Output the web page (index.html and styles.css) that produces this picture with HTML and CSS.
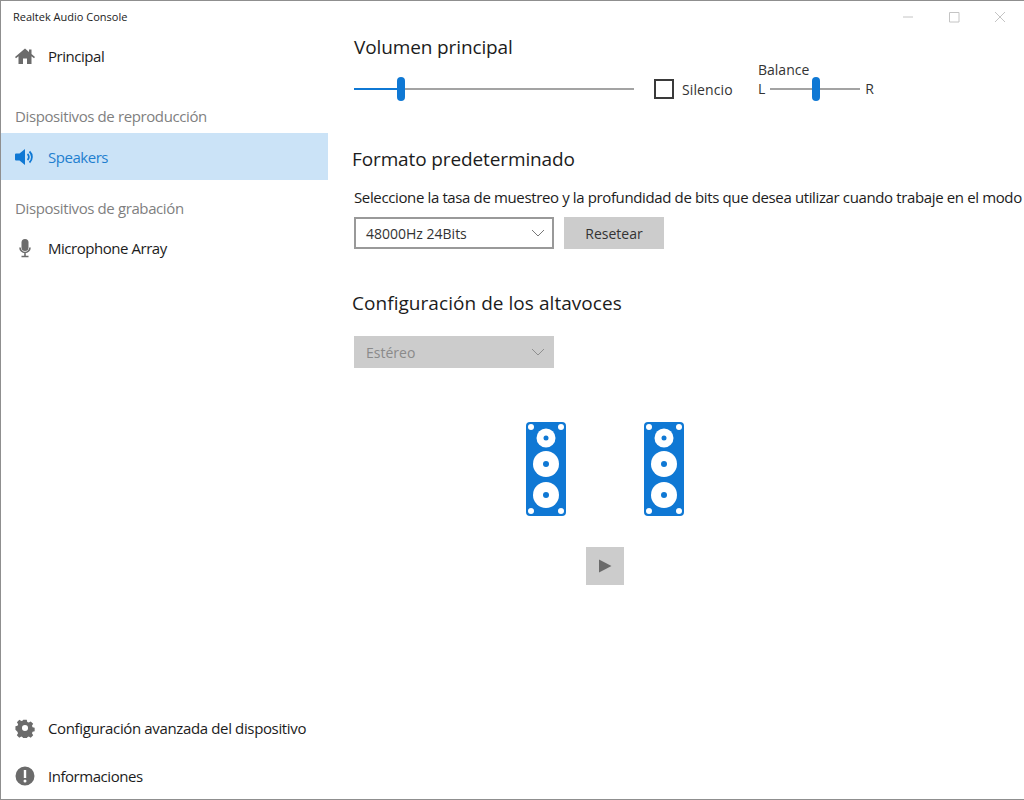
FILE: index.html
```html
<!DOCTYPE html>
<html lang="es">
<head>
<meta charset="utf-8">
<title>Realtek Audio Console</title>
<link rel="stylesheet" href="styles.css">
</head>
<body>
<div class="window">
  <header class="titlebar">
    <span class="app-title">Realtek Audio Console</span>
    <div class="controls">
      <svg class="ctl" viewBox="0 0 12 12"><path d="M1 6h10"/></svg>
      <svg class="ctl" viewBox="0 0 12 12"><path d="M1.500 1.500h9.500v9.500h-9.500z"/></svg>
      <svg class="ctl" viewBox="0 0 12 12"><path d="M1 1l10 10M11 1L1 11"/></svg>
    </div>
  </header>
  <div class="body">
    <nav class="sidebar">
      <div class="nav-item">
        <svg class="ico" viewBox="0 0 20 20"><path d="M10 2.500L0 11l1 1.200 2.500-2V18h4.500v-5.500h4V18h4.500v-7.800l2.500 2 1-1.200-3.500-3V3.500h-2.500V6z"/></svg>
        <span>Principal</span>
      </div>
      <div class="group first">Dispositivos de reproducción</div>
      <div class="nav-item active">
        <svg class="ico" viewBox="0 0 20 20"><path d="M0 7.500q0-1 1-1h3.500L10 2v16l-5.500-4.500H1q-1 0-1-1z"/><path class="wave" d="M12.500 7a4 4 0 0 1 0 6M14.500 4.500a7.500 7.500 0 0 1 0 11"/></svg>
        <span>Speakers</span>
      </div>
      <div class="group">Dispositivos de grabación</div>
      <div class="nav-item">
        <svg class="ico" viewBox="0 0 20 20"><rect x="6.500" y="1" width="7" height="12" rx="3.500"/><path class="line" d="M5 9.500a5 5 0 0 0 10 0M10 15v3M6.500 18.500h7"/></svg>
        <span>Microphone Array</span>
      </div>
      <div class="spacer"></div>
      <div class="nav-item long">
        <svg class="ico" viewBox="0 0 20 20"><path fill-rule="evenodd" d="M8 0.500h4l.6 2.600 1.700.7 2.300-1.400 2.800 2.800-1.400 2.300.7 1.700 2.400.6v4l-2.400.6-.7 1.700 1.400 2.300-2.800 2.800-2.300-1.400-1.700.7-.6 2.400H8l-.6-2.400-1.700-.7-2.300 1.400-2.800-2.800 1.400-2.300-.7-1.700L-1 12V8l2.400-.6.700-1.700L.7 3.400 3.500.6l2.300 1.400 1.700-.7zM10 6.500a3.500 3.500 0 1 0 0 7 3.500 3.500 0 0 0 0-7z" transform="translate(1.300 1.300) scale(.87)"/></svg>
        <span>Configuración avanzada del dispositivo</span>
      </div>
      <div class="nav-item">
        <svg class="ico" viewBox="0 0 20 20"><path fill-rule="evenodd" d="M10 0.500a9.500 9.500 0 1 1 0 19 9.500 9.500 0 0 1 0-19zM8.800 4v8h2.400V4zM10 13.500a1.500 1.500 0 1 0 0 3 1.500 1.500 0 0 0 0-3z"/></svg>
        <span>Informaciones</span>
      </div>
    </nav>
    <main class="main">
      <h2 class="h-volume">Volumen principal</h2>
      <div class="volume-row">
        <div class="slider vol"><i class="fill"></i><b class="thumb"></b></div>
        <label class="check"><i class="box"></i>Silencio</label>
        <div class="balance">
          <div class="bal-title">Balance</div>
          <div class="bal-row">
            <span>L</span>
            <div class="slider bal"><b class="thumb"></b></div>
            <span>R</span>
          </div>
        </div>
      </div>
      <h2 class="h-format">Formato predeterminado</h2>
      <p class="desc">Seleccione la tasa de muestreo y la profundidad de bits que desea utilizar cuando trabaje en el modo</p>
      <div class="format-row">
        <div class="select">48000Hz 24Bits<svg class="chev" viewBox="0 0 14 8"><path d="M1 1l6 6 6-6"/></svg></div>
        <div class="button">Resetear</div>
      </div>
      <h2 class="h-config">Configuración de los altavoces</h2>
      <div class="select disabled">Estéreo<svg class="chev" viewBox="0 0 14 8"><path d="M1 1l6 6 6-6"/></svg></div>
      <div class="speakers">
        <svg class="speaker" viewBox="0 0 40 94"><rect width="40" height="94" rx="4"/><g class="w"><circle cx="5" cy="5" r="3"/><circle cx="35" cy="5" r="3"/><circle cx="5" cy="89" r="3"/><circle cx="35" cy="89" r="3"/><circle cx="20" cy="16" r="9.500"/><circle cx="20" cy="42" r="13"/><circle cx="20" cy="73" r="13"/></g><circle cx="20" cy="16" r="2.500"/><circle cx="20" cy="42" r="3"/><circle cx="20" cy="73" r="3"/></svg>
        <svg class="speaker" viewBox="0 0 40 94"><rect width="40" height="94" rx="4"/><g class="w"><circle cx="5" cy="5" r="3"/><circle cx="35" cy="5" r="3"/><circle cx="5" cy="89" r="3"/><circle cx="35" cy="89" r="3"/><circle cx="20" cy="16" r="9.500"/><circle cx="20" cy="42" r="13"/><circle cx="20" cy="73" r="13"/></g><circle cx="20" cy="16" r="2.500"/><circle cx="20" cy="42" r="3"/><circle cx="20" cy="73" r="3"/></svg>
      </div>
      <div class="play-wrap">
        <div class="play"><svg viewBox="0 0 14 14"><path d="M1 .5L13.500 7 1 13.500z"/></svg></div>
      </div>
    </main>
  </div>
</div>
</body>
</html>
```
FILE: styles.css
```css
* { box-sizing: border-box; }
html, body { margin: 0; height: 100%; }
body { background: #fff; font-family: "Open Sans", "Noto Sans", sans-serif; color: #1c1c1c; overflow: hidden; }
.window { width: 1024px; height: 800px; border-top: 1px solid #8f8f8f; border-left: 1px solid #8f8f8f; border-bottom: 1px solid #8f8f8f; display: flex; flex-direction: column; overflow: hidden; }
.titlebar { height: 31px; flex: none; display: flex; align-items: center; justify-content: space-between; padding-left: 12px; }
.app-title { font-size: 11px; color: #222; }
.controls { display: flex; gap: 34px; padding-right: 18px; }
.ctl { width: 12px; height: 12px; fill: none; stroke: #c4c4c4; stroke-width: 1; }
.body { flex: 1; display: flex; min-height: 0; }
.sidebar { width: 327px; flex: none; display: flex; flex-direction: column; margin-bottom: -1px; }
.nav-item { height: 48px; flex: none; display: flex; align-items: center; padding-left: 14px; gap: 13px; font-size: 15px; letter-spacing: -0.46px; }
.nav-item.long { letter-spacing: -0.36px; }
.nav-item .ico { width: 20px; height: 20px; flex: none; fill: #6b6b6b; }
.nav-item .line { fill: none; stroke: #6b6b6b; stroke-width: 1.600; }
.nav-item.active { height: 47px; background: #cbe3f7; color: #1f7fcf; }
.nav-item.active .ico { fill: #0f78d4; }
.nav-item .wave { fill: none; stroke: #0f78d4; stroke-width: 1.800; }
.group { font-size: 15px; color: #7f7f7f; height: 23px; line-height: 23px; padding-left: 14px; margin-top: 17px; margin-bottom: 4px; letter-spacing: -0.39px; }
.group.first { margin-top: 25px; margin-bottom: 5px; }
.spacer { flex: 1; }
.main { flex: 1; min-width: 0; padding: 2px 0 0 26px; white-space: nowrap; overflow: hidden; }
h2 { font-weight: 400; font-size: 19px; line-height: 26px; margin: 0; color: #1c1c1c; letter-spacing: -0.12px; }
.h-volume { margin-bottom: 10px; }
.volume-row { display: flex; align-items: center; height: 38px; }
.slider { position: relative; height: 2px; background: #a3a3a3; flex: none; }
.slider .thumb { position: absolute; top: -11px; width: 8px; height: 24px; border-radius: 4px; background: #0f78d4; }
.vol { width: 280px; }
.vol .fill { position: absolute; left: 0; top: 0; height: 2px; width: 47px; background: #0f78d4; }
.vol .thumb { left: 43px; }
.check { display: flex; align-items: center; gap: 8px; margin-left: 20px; font-size: 14px; letter-spacing: 0.1px; color: #333; width: 104px; }
.box { width: 20px; height: 20px; border: 2px solid #3a3a3a; flex: none; }
.balance { font-size: 14px; color: #333; position: relative; top: -10px; }
.bal-title { line-height: 19px; }
.bal-row { display: flex; align-items: center; height: 20px; gap: 5px; }
.bal { width: 90px; }
.bal .thumb { left: 42px; }
.h-format { margin-top: 38px; margin-left: -2px; margin-bottom: 15px; }
.desc { margin: 0 0 10px; font-size: 15px; line-height: 20px; letter-spacing: -0.37px; color: #1c1c1c; }
.format-row { display: flex; gap: 10px; }
.select { width: 200px; height: 32px; border: 2px solid #999; display: flex; align-items: center; justify-content: space-between; padding: 0 0 0 10px; font-size: 14px; color: #333; }
.chev { width: 14px; height: 8px; margin-right: 7px; fill: none; stroke: #777; stroke-width: 1; }
.select.disabled { background: #ccc; border-color: #ccc; color: #8a8a8a; }
.select.disabled .chev { stroke: #8f8f8f; }
.button { width: 100px; height: 32px; background: #ccc; display: flex; align-items: center; justify-content: center; font-size: 14px; color: #333; }
.h-config { margin-top: 41px; margin-left: -2px; margin-bottom: 20px; letter-spacing: 0.05px; }
.speakers { display: flex; gap: 78px; margin-top: 54px; margin-left: 172px; }
.speaker { width: 40px; height: 94px; fill: #0f78d4; display: block; }
.speaker .w { fill: #fff; }
.play-wrap { margin-top: 31px; margin-left: 232px; }
.play { width: 38px; height: 38px; background: #ccc; display: flex; align-items: center; justify-content: center; }
.play svg { width: 14px; height: 14px; fill: #6b6b6b; }
```
